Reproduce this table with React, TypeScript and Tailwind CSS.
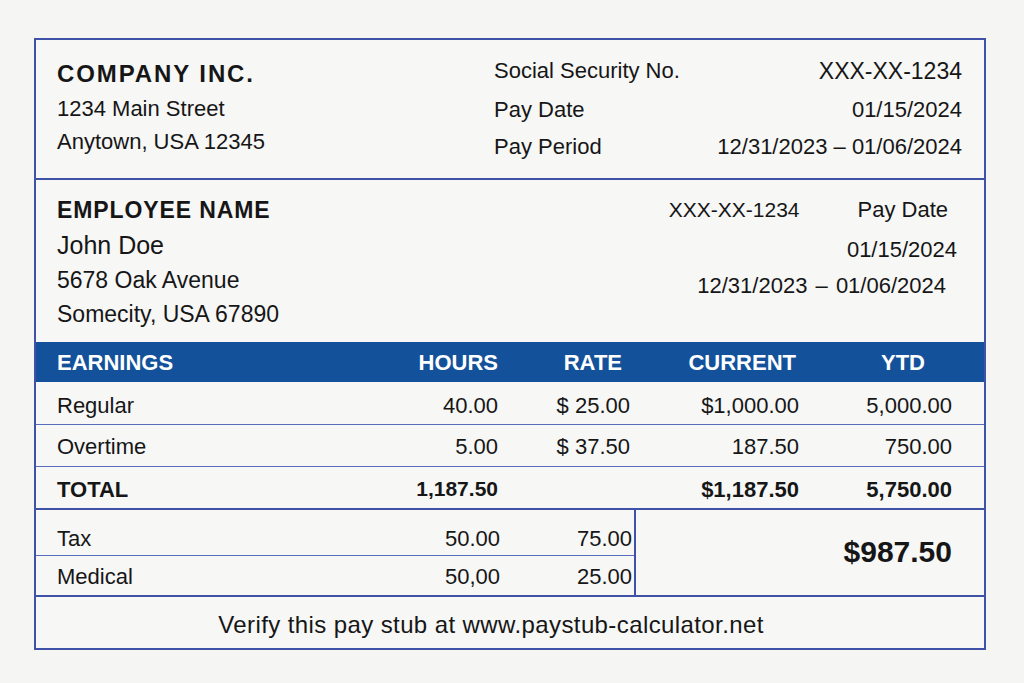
const rows = [
  { label: 'Regular', hours: '40.00', rate: '$ 25.00', current: '$1,000.00', ytd: '5,000.00', h: 'h-[43px] pt-[4px]' },
  { label: 'Overtime', hours: '5.00', rate: '$ 37.50', current: '187.50', ytd: '750.00', h: 'h-[42px] pt-[2px]' },
]

const deductions = [
  { label: 'Tax', a: '50.00', b: '75.00', h: 'h-[46px] pt-[12px] border-b border-[#5a6cbd]' },
  { label: 'Medical', a: '50,00', b: '25.00', h: 'h-[41px] pt-[2px]' },
]

export default function App() {
  return (
    <div className="min-h-[683px] w-[1024px] bg-[#f5f5f3] pt-[38px] pl-[34px] text-[#161616] font-['Liberation_Sans',Arial,sans-serif]">
      <div className="w-[952px] border-2 border-[#3f52a8] bg-[#f7f7f6]">
        {/* company header */}
        <div className="h-[140px] border-b-2 border-[#3f52a8] flex">
          <div className="flex-1 pl-[21px] pt-[16px]">
            <div className="h-[36px] leading-[36px] text-[24px] font-bold tracking-[1.9px]">COMPANY INC.</div>
            <div className="h-[34px] leading-[34px] text-[22px]">1234 Main Street</div>
            <div className="h-[32px] leading-[32px] text-[22px]">Anytown, USA 12345</div>
          </div>
          <div className="w-[490px] pr-[22px] pt-[12px] text-[22px]">
            <div className="h-[38px] leading-[38px] flex justify-between">
              <span>Social Security No.</span>
              <span className="text-[23px]">XXX-XX-1234</span>
            </div>
            <div className="h-[39px] leading-[39px] flex justify-between"><span>Pay Date</span><span>01/15/2024</span></div>
            <div className="h-[35px] leading-[35px] flex justify-between"><span>Pay Period</span><span>12/31/2023 – 01/06/2024</span></div>
          </div>
        </div>

        {/* employee */}
        <div className="h-[162px] flex">
          <div className="flex-1 pl-[21px] pt-[13px]">
            <div className="h-[34px] leading-[34px] text-[23px] font-bold tracking-[0.9px]">EMPLOYEE NAME</div>
            <div className="h-[36px] leading-[36px] text-[25px]">John Doe</div>
            <div className="h-[34px] leading-[34px] text-[23px]">5678 Oak Avenue</div>
            <div className="h-[34px] leading-[34px] text-[23px]">Somecity, USA 67890</div>
          </div>
          <div className="w-[420px] pt-[13px] text-[22px]">
            <div className="h-[34px] leading-[34px] flex justify-end gap-[58px] pr-[36px]">
              <span className="text-[21px]">XXX-XX-1234</span>
              <span>Pay Date</span>
            </div>
            <div className="h-[40px] leading-[46px] text-right pr-[27px]">01/15/2024</div>
            <div className="h-[38px] leading-[38px] text-right pr-[38px]">
              12/31/2023 <span className="px-[2px]">–</span> 01/06/2024
            </div>
          </div>
        </div>

        {/* earnings header */}
        <div className="h-[40px] bg-[#13529b] text-white text-[22px] font-bold flex items-center">
          <div className="flex-1 pl-[21px]">EARNINGS</div>
          <div className="w-[120px] text-right">HOURS</div>
          <div className="w-[132px] text-right pr-[8px]">RATE</div>
          <div className="w-[169px] text-right pr-[3px]">CURRENT</div>
          <div className="w-[153px] text-right pr-[27px]">YTD</div>
          <div className="w-[32px]" />
        </div>

        {rows.map((r) => (
          <div key={r.label} className={`${r.h} border-b border-[#5a6cbd] text-[22px] flex items-center`}>
            <div className="flex-1 pl-[21px]">{r.label}</div>
            <div className="w-[120px] text-right">{r.hours}</div>
            <div className="w-[132px] text-right">{r.rate}</div>
            <div className="w-[169px] text-right">{r.current}</div>
            <div className="w-[153px] text-right">{r.ytd}</div>
            <div className="w-[32px]" />
          </div>
        ))}

        <div className="h-[43px] pt-[3px] border-b-2 border-[#3f52a8] text-[22px] font-bold flex items-center">
          <div className="flex-1 pl-[21px]">TOTAL</div>
          <div className="w-[120px] text-right text-[21px]">1,187.50</div>
          <div className="w-[132px]" />
          <div className="w-[169px] text-right">$1,187.50</div>
          <div className="w-[153px] text-right">5,750.00</div>
          <div className="w-[32px]" />
        </div>

        {/* deductions + net */}
        <div className="h-[87px] border-b-2 border-[#3f52a8] flex">
          <div className="w-[600px] border-r-2 border-[#3f52a8] flex flex-col">
            {deductions.map((d) => (
              <div key={d.label} className={`${d.h} text-[22px] flex items-center`}>
                <div className="flex-1 pl-[21px]">{d.label}</div>
                <div className="w-[120px] text-right">{d.a}</div>
                <div className="w-[134px] text-right pr-[2px]">{d.b}</div>
              </div>
            ))}
          </div>
          <div className="flex-1 flex items-center justify-end pr-[32px] pb-[2px] text-[30px] font-bold">$987.50</div>
        </div>

        {/* footer */}
        <div className="h-[51px] pt-[4px] pr-[38px] flex items-center justify-center text-[24px] tracking-[0.4px]">
          Verify this pay stub at www.paystub-calculator.net
        </div>
      </div>
    </div>
  )
}
